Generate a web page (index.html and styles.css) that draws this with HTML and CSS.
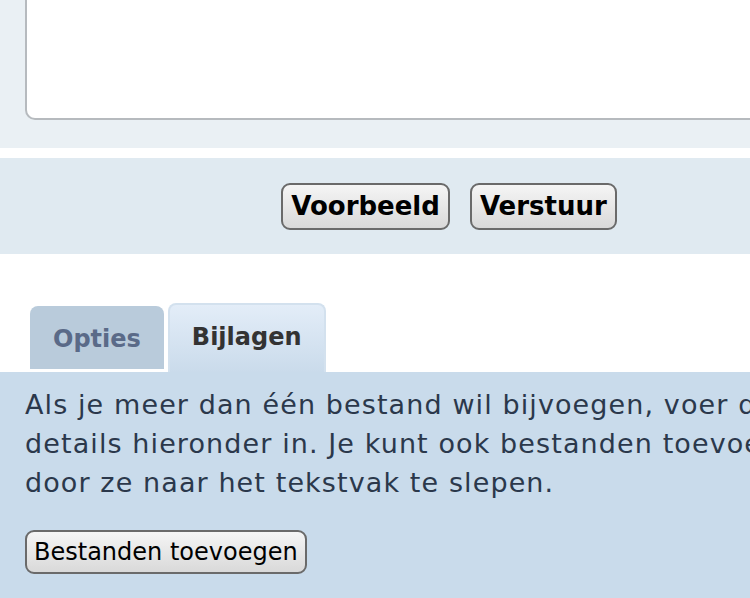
FILE: index.html
```html
<!DOCTYPE html>
<html>
<head>
  <meta charset="utf-8">
  <title>Bericht plaatsen</title>
  <link rel="stylesheet" href="styles.css">
</head>
<body>
  <div class="page">
    <div class="editor">
      <div class="textbox"></div>
    </div>

    <div class="actions">
      <button class="btn btn-main">Voorbeeld</button>
      <button class="btn btn-main">Verstuur</button>
    </div>

    <div class="tabs">
      <div class="tab">Opties</div>
      <div class="tab active">Bijlagen</div>
    </div>

    <div class="panel">
      <p class="hint">Als je meer dan één bestand wil bijvoegen, voer de details hieronder in. Je kunt ook bestanden toevoegen door ze naar het tekstvak te slepen.</p>
      <button class="btn btn-add">Bestanden toevoegen</button>
    </div>
  </div>
</body>
</html>
```

FILE: styles.css
```css
* { margin: 0; padding: 0; box-sizing: border-box; }
html, body {
  overflow: hidden;
  background: #fff;
}
body {
  font-family: "DejaVu Sans", Verdana, sans-serif;
}

.page {
  width: 900px;
}

.editor {
  height: 148px;
  padding-left: 25px;
  background-color: #eaf0f4;
}
.textbox {
  height: 120px;
  background: #fff;
  border: 2px solid #b6babe;
  border-top: none;
  border-right: none;
  border-bottom-left-radius: 10px;
}

.actions {
  margin-top: 10px;
  height: 96px;
  display: flex;
  justify-content: center;
  align-items: center;
  gap: 20px;
  padding-right: 2px;
  background-color: #e0eaf1;
}

.btn {
  font-family: "DejaVu Sans", Verdana, sans-serif;
  color: #000;
  background: linear-gradient(#f5f5f5, #d9d9d9);
  border: 2px solid #6a6a6a;
  border-radius: 9px;
  cursor: pointer;
}
.btn-main {
  font-size: 26px;
  font-weight: bold;
  line-height: 43px;
  padding: 0 8px;
}

.tabs {
  margin-top: 49px;
  padding-left: 30px;
  display: flex;
  align-items: flex-end;
  gap: 4px;
}
.tab {
  font-size: 24px;
  font-weight: bold;
  color: #5a6a88;
  background-color: #b9cbdb;
  border-top-left-radius: 8px;
  border-top-right-radius: 8px;
  height: 63px;
  line-height: 67px;
  padding: 0 23px;
  margin-bottom: 3px;
}
.tab.active {
  color: #333;
  height: 69px;
  line-height: 65px;
  margin-bottom: 0;
  padding: 0 22px;
  background: linear-gradient(#e3edf8, #cadbeb);
  border: 2px solid #d3e1ee;
  border-bottom: none;
}

.panel {
  background-color: #c9dbeb;
  padding: 13px 25px 30px;
  min-height: 240px;
}
.hint {
  font-size: 27px;
  line-height: 39px;
  letter-spacing: 1.1px;
  color: #2b384b;
}
.btn-add {
  margin-top: 28px;
  font-size: 24px;
  line-height: 40px;
  padding: 0 7px;
}
```
